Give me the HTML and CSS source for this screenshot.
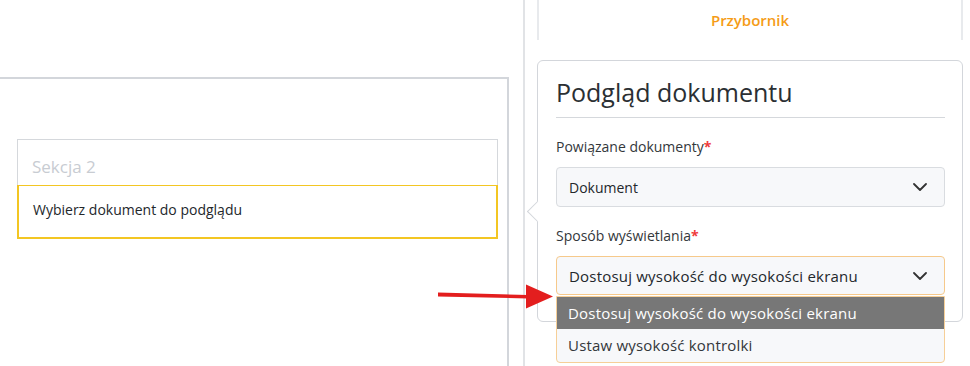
FILE: index.html
```html
<!DOCTYPE html>
<html lang="pl">
<head>
    <meta charset="UTF-8">
    <meta name="viewport" content="width=device-width, initial-scale=1.0">
    <title>Podgląd dokumentu</title>
    <link rel="stylesheet" href="styles.css">
</head>
<body>
    <div class="page">
        <div class="main">
            <div class="panel">
                <div class="section">
                    <div class="section-title">Sekcja 2</div>
                    <div class="section-body">Wybierz dokument do podglądu</div>
                </div>
            </div>
        </div>

        <div class="sidebar">
            <div class="tab">Przybornik</div>
            <div class="card">
                <h2>Podgląd dokumentu</h2>

                <label>Powiązane dokumenty<span class="req">*</span></label>
                <div class="select">
                    <span>Dokument</span>
                    <svg class="chevron" width="14" height="8" viewBox="0 0 14 8"><path d="M1 1l6 6 6-6" fill="none" stroke="#333" stroke-width="1.8" stroke-linecap="round" stroke-linejoin="round"/></svg>
                </div>

                <label>Sposób wyświetlania<span class="req">*</span></label>
                <div class="select-wrap">
                    <div class="select focused">
                        <span>Dostosuj wysokość do wysokości ekranu</span>
                        <svg class="chevron" width="14" height="8" viewBox="0 0 14 8"><path d="M1 1l6 6 6-6" fill="none" stroke="#333" stroke-width="1.8" stroke-linecap="round" stroke-linejoin="round"/></svg>
                    </div>
                    <ul class="options">
                        <li class="active">Dostosuj wysokość do wysokości ekranu</li>
                        <li>Ustaw wysokość kontrolki</li>
                    </ul>
                </div>
            </div>
        </div>
    </div>

    <!-- strzałka -->
    <svg class="pointer" width="120" height="32" viewBox="0 0 120 32">
        <path d="M0 12.5 L90 15 L90 18.5 L0 16.5 Z" fill="#e31e1e"/>
        <path d="M88 4.5 L115 16.5 L88 28.5 Z" fill="#e31e1e"/>
    </svg>
</body>
</html>
```

FILE: styles.css
```css
body {
    margin: 0;
    font-family: "Open Sans", "Noto Sans", sans-serif;
    background: #fff;
    color: #222;
    overflow: hidden;
}
.page {
    display: flex;
    height: 366px;
}
.main {
    width: 523px;
    padding-top: 77px;
}
.panel {
    width: 509px;
    height: 100%;
    border-top: 2px solid #d3d6db;
    border-right: 2px solid #d3d6db;
    padding: 60px 0 0 17px;
    box-sizing: border-box;
}
.section {
    width: 481px;
    border: 1px solid #d5d8dc;
    box-sizing: border-box;
}
.section-title {
    height: 45px;
    line-height: 54px;
    padding-left: 14px;
    font-size: 17px;
    color: #c8ccd2;
}
.section-body {
    margin: 0 -1px -1px -1px;
    height: 54px;
    border: 2px solid #f3c623;
    border-width: 1px 2px 2px 2px;
    padding: 14px 0 0 14px;
    box-sizing: border-box;
    font-size: 14px;
    color: #23272b;
}
.sidebar {
    flex: 1;
    border-left: 2px solid #e1e3e6;
    padding: 0 7px 0 12px;
}
.tab {
    height: 40px;
    line-height: 40px;
    border-left: 2px solid #e8eaed;
    border-right: 2px solid #e8eaed;
    text-align: center;
    color: #f59c16;
    font-size: 15px;
    font-weight: 600;
}
.card {
    position: relative;
    margin-top: 20px;
    height: 262px;
    border: 1px solid #d3d6db;
    border-radius: 6px;
    padding: 14px 17px 0 18px;
    box-sizing: border-box;
}
.card::before {
    content: "";
    position: absolute;
    left: -8px;
    top: 143px;
    width: 14px;
    height: 14px;
    background: #fff;
    border-left: 1px solid #d3d6db;
    border-bottom: 1px solid #d3d6db;
    transform: rotate(45deg);
}
.card h2 {
    margin: 0 0 18px;
    padding-bottom: 8px;
    border-bottom: 1px solid #d5d8dc;
    font-size: 25px;
    font-weight: 500;
    line-height: 34px;
    color: #2b2f33;
}
.card label {
    display: block;
    font-size: 14px;
    line-height: 22px;
    color: #33373b;
    margin-bottom: 9px;
}
.req {
    color: #ef3b3b;
    font-weight: bold;
}
.select {
    height: 40px;
    border: 1px solid #d9dce0;
    border-radius: 4px;
    background: #f7f8fa;
    display: flex;
    align-items: center;
    justify-content: space-between;
    padding: 0 17px 0 12px;
    box-sizing: border-box;
    font-size: 14px;
    color: #23272b;
    margin-bottom: 18px;
}
.select.focused {
    height: 39px;
    border-color: #f6c98b;
    margin-bottom: 0;
    font-size: 15px;
    letter-spacing: 0.2px;
}
.select-wrap {
    position: relative;
}
.options {
    position: absolute;
    left: 0;
    right: 0;
    top: 40px;
    margin: 0;
    padding: 0;
    list-style: none;
    border: 1px solid #f6cf98;
    border-radius: 0 0 4px 4px;
    background: #f7f8fa;
    overflow: hidden;
    font-size: 15px;
    letter-spacing: 0.2px;
}
.options li {
    height: 33px;
    line-height: 32px;
    padding-left: 11px;
    color: #33373b;
}
.options li.active {
    height: 32px;
    background: #777;
    color: #fff;
}
.pointer {
    position: absolute;
    left: 438px;
    top: 280px;
}
```
